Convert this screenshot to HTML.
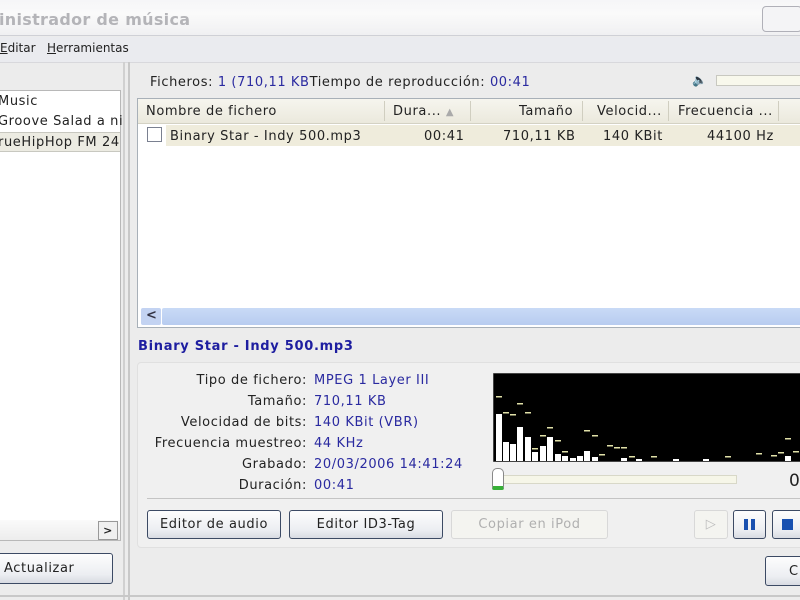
<!DOCTYPE html>
<html><head><meta charset="utf-8"><style>
*{margin:0;padding:0;box-sizing:border-box}
body{width:800px;height:600px;overflow:hidden;background:#ececec;font-family:"DejaVu Sans","Liberation Sans",sans-serif;font-size:13px;letter-spacing:0.6px;color:#222;position:relative}
.a{position:absolute;white-space:nowrap}
.btn{position:absolute;border:1px solid #3c4a64;border-radius:3px;background:linear-gradient(#fdfdfd,#eceef2 70%,#d8dbe2);text-align:center;font-size:13px;color:#222}
.blue{color:#2a2aa0}
</style></head><body>
<div class="a" style="left:0;top:0;width:800px;height:36px;background:linear-gradient(#f6f6f8,#fafafa 40%,#f0f0f2);border-bottom:1px solid #cfd0d6"></div>
<div class="a" style="left:-1px;top:10px;font-size:16px;font-weight:bold;color:#b4b4b8;letter-spacing:0.3px">inistrador de música</div>
<div class="a" style="left:762px;top:6px;width:40px;height:26px;border:1px solid #b0b0b8;border-radius:4px;background:#f4f4f6"></div>
<div class="a" style="left:0;top:37px;width:800px;height:25px;background:#eaebef"></div>
<div class="a" style="left:0;top:41px;font-size:12px;letter-spacing:0"><u>E</u>ditar</div>
<div class="a" style="left:47px;top:41px;font-size:12px;letter-spacing:0"><u>H</u>erramientas</div>
<div class="a" style="left:0;top:62px;width:800px;height:1px;background:#d8d8dc"></div>
<!-- left pane -->
<div class="a" style="left:0;top:90px;width:121px;height:451px;background:#fff;border:1px solid #b8b8b8;border-left:none"></div>
<div class="a" style="left:-2px;top:94px">Music</div>
<div class="a" style="left:-2px;top:114px">Groove Salad a ni</div>
<div class="a" style="left:0;top:132px;width:120px;height:20px;background:#ecebe2;border-top:1px solid #c8c8c0;border-bottom:1px solid #c8c8c0"></div>
<div class="a" style="left:-2px;top:135px">rueHipHop FM 24</div>
<div class="a" style="left:0;top:520px;width:120px;height:20px;background:linear-gradient(#fafafa,#ededed)"></div>
<div class="a" style="left:98px;top:521px;width:20px;height:19px;border:1px solid #999;background:#f0f0f0;font-size:11px;text-align:center;line-height:17px;font-weight:bold">&gt;</div>
<div class="btn" style="left:-4px;top:553px;width:117px;height:31px;line-height:30px;text-align:left;padding-left:7px">Actualizar</div>
<div class="a" style="left:123px;top:62px;width:2px;height:538px;background:#d0d0d0"></div>
<div class="a" style="left:128px;top:62px;width:2px;height:538px;background:#c8c8c8"></div>
<!-- right -->
<div class="a" style="left:150px;top:75px">Ficheros: <span class="blue">1 (710,11 KB</span>Tiempo de reproducción: <span class="blue">00:41</span></div>
<div class="a" style="left:692px;top:73px;font-size:12px;color:#444">&#128264;</div>
<div class="a" style="left:716px;top:75px;width:90px;height:11px;border:1px solid #c8c8c0;background:#f8f8ec"></div>
<div class="a" style="left:137px;top:98px;width:670px;height:230px;background:#fff;border:1px solid #a8b0b8"></div>
<div class="a" style="left:138px;top:99px;width:670px;height:25px;background:linear-gradient(#f6f5ee,#ebe9dd);border-bottom:1px solid #d4d2c4"></div>
<div class="a" style="left:146px;top:104px">Nombre de fichero</div>
<div class="a" style="left:384px;top:101px;width:1px;height:20px;background:#d0cec0"></div>
<div class="a" style="left:393px;top:104px">Dura... <span style="color:#aaa;font-size:10px">▲</span></div>
<div class="a" style="left:470px;top:101px;width:1px;height:20px;background:#d0cec0"></div>
<div class="a" style="left:519px;top:104px">Tamaño</div>
<div class="a" style="left:582px;top:101px;width:1px;height:20px;background:#d0cec0"></div>
<div class="a" style="left:597px;top:104px">Velocid...</div>
<div class="a" style="left:668px;top:101px;width:1px;height:20px;background:#d0cec0"></div>
<div class="a" style="left:678px;top:104px">Frecuencia ...</div>
<div class="a" style="left:778px;top:101px;width:1px;height:20px;background:#d0cec0"></div>
<div class="a" style="left:166px;top:125px;width:642px;height:21px;background:#efecdc"></div>
<div class="a" style="left:147px;top:127px;width:15px;height:15px;border:1px solid #7a8090;background:#fff"></div>
<div class="a" style="left:170px;top:129px">Binary Star - Indy 500.mp3</div>
<div class="a" style="left:424px;top:129px">00:41</div>
<div class="a" style="left:503px;top:129px">710,11 KB</div>
<div class="a" style="left:603px;top:129px">140 KBit</div>
<div class="a" style="left:707px;top:129px">44100 Hz</div>
<div class="a" style="left:138px;top:306px;width:670px;height:21px;background:#fff"></div>
<div class="a" style="left:141px;top:308px;width:20px;height:17px;background:#c3d3f2;border-radius:2px;color:#334;font-weight:bold;line-height:16px;padding-left:5px">&lt;</div>
<div class="a" style="left:162px;top:308px;width:646px;height:17px;background:linear-gradient(#c9daf6,#b8ccf0);border-radius:2px"></div>
<div class="a" style="left:138px;top:339px;font-size:13px;font-weight:bold;color:#1e1ea0;letter-spacing:0.7px">Binary Star - Indy 500.mp3</div>
<div class="a" style="left:137px;top:362px;width:670px;height:186px;background:#f0f0f0;border:1px solid #e0e0e0;border-radius:4px"></div>
<div class="a" style="left:120px;top:370px;width:187px;text-align:right;line-height:21px">Tipo de fichero:<br>Tamaño:<br>Velocidad de bits:<br>Frecuencia muestreo:<br>Grabado:<br>Duración:</div>
<div class="a blue" style="left:314px;top:370px;line-height:21px">MPEG 1 Layer III<br>710,11 KB<br>140 KBit (VBR)<br>44 KHz<br>20/03/2006 14:41:24<br>00:41</div>
<svg class="a" style="left:493px;top:373px" width="310" height="89">
<rect x="0" y="0" width="310" height="89" fill="#000" stroke="#888"/>
<g fill="#fff">
<rect x="3" y="41" width="6" height="47"/><rect x="10" y="69" width="6" height="19"/><rect x="17" y="71" width="6" height="17"/><rect x="24" y="54" width="6" height="34"/><rect x="32" y="64" width="6" height="24"/><rect x="39" y="79" width="6" height="9"/><rect x="47" y="73" width="6" height="15"/><rect x="54" y="64" width="6" height="24"/><rect x="62" y="81" width="6" height="7"/><rect x="69" y="83" width="6" height="5"/><rect x="77" y="85" width="6" height="3"/><rect x="84" y="83" width="6" height="5"/><rect x="91" y="78" width="6" height="10"/><rect x="99" y="84" width="6" height="4"/><rect x="128" y="85" width="6" height="3"/><rect x="143" y="86" width="6" height="2"/><rect x="180" y="86" width="6" height="2"/><rect x="210" y="86" width="6" height="2"/><rect x="292" y="83" width="6" height="5"/></g>
<g fill="#e0e0a8">
<rect x="3" y="23" width="6" height="1.5"/><rect x="10" y="39" width="6" height="1.5"/><rect x="17" y="41" width="6" height="1.5"/><rect x="24" y="30" width="6" height="1.5"/><rect x="32" y="39" width="6" height="1.5"/><rect x="39" y="75" width="6" height="1.5"/><rect x="47" y="62" width="6" height="1.5"/><rect x="54" y="54" width="6" height="1.5"/><rect x="62" y="67" width="6" height="1.5"/><rect x="69" y="78" width="6" height="1.5"/><rect x="91" y="57" width="6" height="1.5"/><rect x="99" y="62" width="6" height="1.5"/><rect x="106" y="81" width="6" height="1.5"/><rect x="114" y="72" width="6" height="1.5"/><rect x="121" y="74" width="6" height="1.5"/><rect x="128" y="74" width="6" height="1.5"/><rect x="136" y="83" width="6" height="1.5"/><rect x="158" y="83" width="6" height="1.5"/><rect x="232" y="83" width="6" height="1.5"/><rect x="263" y="80" width="6" height="1.5"/><rect x="278" y="82" width="6" height="1.5"/><rect x="285" y="79" width="6" height="1.5"/><rect x="292" y="65" width="6" height="1.5"/><rect x="300" y="78" width="6" height="1.5"/></g>
</svg>
<div class="a" style="left:496px;top:475px;width:241px;height:9px;background:#f6f6e8;border:1px solid #d8d8c8"></div>
<div class="a" style="left:492px;top:468px;width:12px;height:22px;background:#fff;border:1px solid #888;border-radius:5px 5px 2px 2px;border-bottom:4px solid #38b038"></div>
<div class="a" style="left:789px;top:471px;font-size:17px">0</div>
<div class="a" style="left:147px;top:498px;width:660px;height:1px;background:#c4c4c4"></div>
<div class="btn" style="left:147px;top:510px;width:134px;height:29px;line-height:28px">Editor de audio</div>
<div class="btn" style="left:289px;top:510px;width:154px;height:29px;line-height:28px">Editor ID3-Tag</div>
<div class="btn" style="left:451px;top:510px;width:157px;height:29px;line-height:28px;border-color:#d8d8d8;background:#f4f4f0;color:#b0b0b0">Copiar en iPod</div>
<div class="btn" style="left:694px;top:510px;width:34px;height:29px;border-color:#d8d8d8;background:#f4f4f0;color:#bbb;line-height:27px">▷</div>
<div class="btn" style="left:733px;top:510px;width:33px;height:29px"><div class="a" style="left:10px;top:8px;width:4px;height:11px;background:#1850b0"></div><div class="a" style="left:17px;top:8px;width:4px;height:11px;background:#1850b0"></div></div>
<div class="btn" style="left:772px;top:510px;width:40px;height:29px"><div class="a" style="left:9px;top:8px;width:11px;height:11px;background:#1850b0"></div></div>
<div class="btn" style="left:765px;top:556px;width:45px;height:30px;line-height:29px;text-align:left;padding-left:23px">C</div>
<div class="a" style="left:0;top:595px;width:800px;height:2px;background:#c8c8c8"></div>
</body></html>
